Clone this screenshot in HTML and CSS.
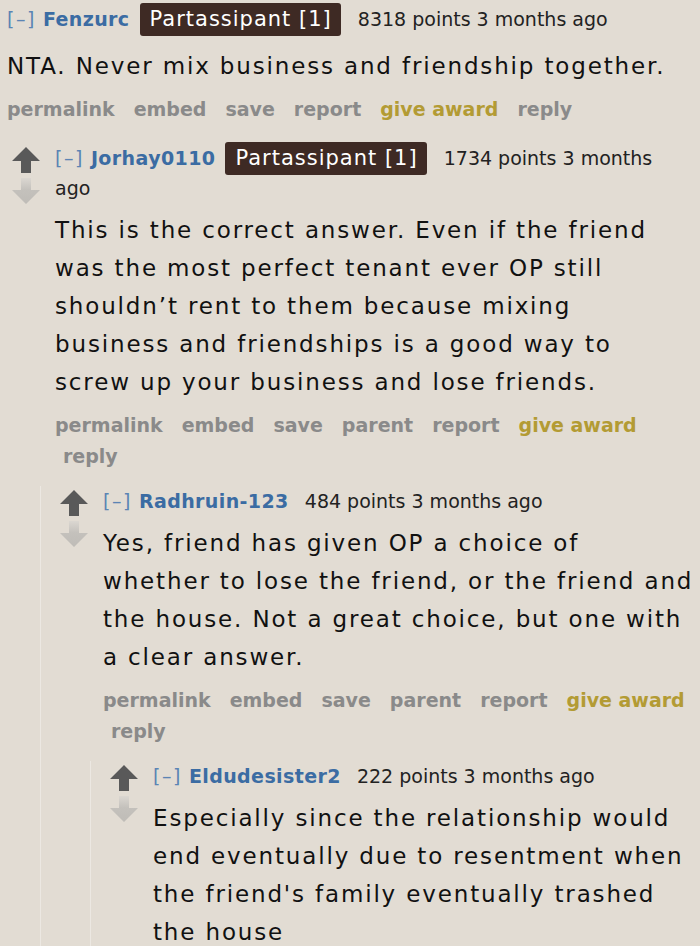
FILE: index.html
```html
<!DOCTYPE html>
<html>
<head>
<meta charset="utf-8">
<link rel="stylesheet" href="styles.css">
</head>
<body>
<div class="thread">
  <div class="comment top">
    <div class="entry">
      <p class="tagline"><span class="expand">[–]</span> <span class="author">Fenzurc</span> <span class="flair">Partassipant [1]</span> 8318 points 3 months ago</p>
      <div class="md top-md">NTA. Never mix business and friendship together.</div>
      <ul class="buttons">
        <li>permalink</li><li>embed</li><li>save</li><li>report</li><li class="award">give award</li><li>reply</li>
      </ul>
      <div class="children">
        <div class="comment c1">
          <div class="midcol">
            <svg class="arrow" viewBox="0 0 28 26"><polygon fill="#595959" points="14,0 28,14 19,14 19,26 9,26 9,14 0,14"/></svg>
            <svg class="arrow" viewBox="0 0 28 26"><defs><linearGradient id="g1" x1="0" y1="0" x2="0" y2="1"><stop offset="0" stop-color="#dbd7d1"/><stop offset="0.45" stop-color="#c4c1bc"/><stop offset="1" stop-color="#bfbcb7"/></linearGradient></defs><polygon fill="url(#g1)" points="9,0 19,0 19,12 28,12 14,26 0,12 9,12"/></svg>
          </div>
          <div class="entry">
            <p class="tagline"><span class="expand">[–]</span> <span class="author">Jorhay0110</span> <span class="flair">Partassipant [1]</span> 1734 points 3 months<br>ago</p>
            <div class="md">This is the correct answer. Even if the friend<br>was the most perfect tenant ever OP still<br>shouldn’t rent to them because mixing<br>business and friendships is a good way to<br>screw up your business and lose friends.</div>
            <ul class="buttons">
              <li>permalink</li><li>embed</li><li>save</li><li>parent</li><li>report</li><li class="award">give award</li><li>reply</li>
            </ul>
            <div class="children">
              <div class="comment">
                <div class="midcol">
                  <svg class="arrow" viewBox="0 0 28 26"><polygon fill="#595959" points="14,0 28,14 19,14 19,26 9,26 9,14 0,14"/></svg>
                  <svg class="arrow" viewBox="0 0 28 26"><defs><linearGradient id="g2" x1="0" y1="0" x2="0" y2="1"><stop offset="0" stop-color="#dbd7d1"/><stop offset="0.45" stop-color="#c4c1bc"/><stop offset="1" stop-color="#bfbcb7"/></linearGradient></defs><polygon fill="url(#g2)" points="9,0 19,0 19,12 28,12 14,26 0,12 9,12"/></svg>
                </div>
                <div class="entry">
                  <p class="tagline"><span class="expand">[–]</span> <span class="author">Radhruin-123</span> <span class="score">484 points 3 months ago</span></p>
                  <div class="md">Yes, friend has given OP a choice of<br>whether to lose the friend, or the friend and<br>the house. Not a great choice, but one with<br>a clear answer.</div>
                  <ul class="buttons">
                    <li>permalink</li><li>embed</li><li>save</li><li>parent</li><li>report</li><li class="award">give award</li><li>reply</li>
                  </ul>
                  <div class="children">
                    <div class="comment">
                      <div class="midcol">
                        <svg class="arrow" viewBox="0 0 28 26"><polygon fill="#595959" points="14,0 28,14 19,14 19,26 9,26 9,14 0,14"/></svg>
                        <svg class="arrow" viewBox="0 0 28 26"><defs><linearGradient id="g3" x1="0" y1="0" x2="0" y2="1"><stop offset="0" stop-color="#dbd7d1"/><stop offset="0.45" stop-color="#c4c1bc"/><stop offset="1" stop-color="#bfbcb7"/></linearGradient></defs><polygon fill="url(#g3)" points="9,0 19,0 19,12 28,12 14,26 0,12 9,12"/></svg>
                      </div>
                      <div class="entry">
                        <p class="tagline"><span class="expand">[–]</span> <span class="author">Eldudesister2</span> <span class="score">222 points 3 months ago</span></p>
                        <div class="md">Especially since the relationship would<br>end eventually due to resentment when<br>the friend's family eventually trashed<br>the house</div>
                      </div>
                    </div>
                  </div>
                </div>
              </div>
            </div>
          </div>
        </div>
      </div>
    </div>
  </div>
</div>
</body>
</html>
```

FILE: styles.css
```css
html, body {
  margin: 0;
  padding: 0;
  background: #e2dcd3;
}
body {
  width: 700px;
  height: 946px;
  overflow: hidden;
  font-family: "DejaVu Sans", Verdana, sans-serif;
  color: #111;
}
.thread {
  padding-left: 7px;
  padding-right: 12px;
}
.comment {
  display: flex;
  align-items: flex-start;
}
.entry {
  flex: 1;
  min-width: 0;
}
.top > .entry {
  padding-top: 4px;
}
.midcol {
  width: 28px;
  flex: none;
  margin-right: 15px;
  display: flex;
  flex-direction: column;
  gap: 5px;
  padding-top: 4px;
}
.arrow {
  width: 28px;
  height: 26px;
  display: block;
}
.tagline {
  margin: 0;
  font-size: 19px;
  line-height: 30px;
  color: #222;
}
.expand {
  color: #5b84b4;
  letter-spacing: 1.5px;
  margin-right: 1px;
}
.author {
  color: #3b6ca3;
  font-weight: bold;
  letter-spacing: 0.4px;
}
.flair {
  background: #3e2a24;
  color: #fff;
  font-size: 21px;
  letter-spacing: 1px;
  padding: 4px 9px 5px 10px;
  border-radius: 3px;
  margin-left: 4px;
  margin-right: 11px;
}
.score {
  margin-left: 10px;
}
.md {
  font-size: 23px;
  line-height: 38px;
  letter-spacing: 1.85px;
  margin-top: 8px;
  white-space: nowrap;
}
.top-md {
  margin-top: 13px;
}
.buttons {
  list-style: none;
  margin: 9px 0 0;
  padding: 0;
  font-size: 19px;
  line-height: 31px;
  font-weight: bold;
  color: #8a8a8a;
  display: flex;
  flex-wrap: wrap;
  column-gap: 11px;
}
.buttons li {
  padding-left: 8px;
}
.buttons li:first-child {
  padding-left: 0;
}
.buttons .award {
  color: #b39b34;
}
.children {
  margin-left: -15px;
  padding-top: 18px;
}
.children .children {
  padding-top: 14px;
}
.children .children .children {
  margin-left: -13px;
}
.children .comment {
  border-left: 1px solid #ece8e2;
  padding-left: 19px;
}
```
